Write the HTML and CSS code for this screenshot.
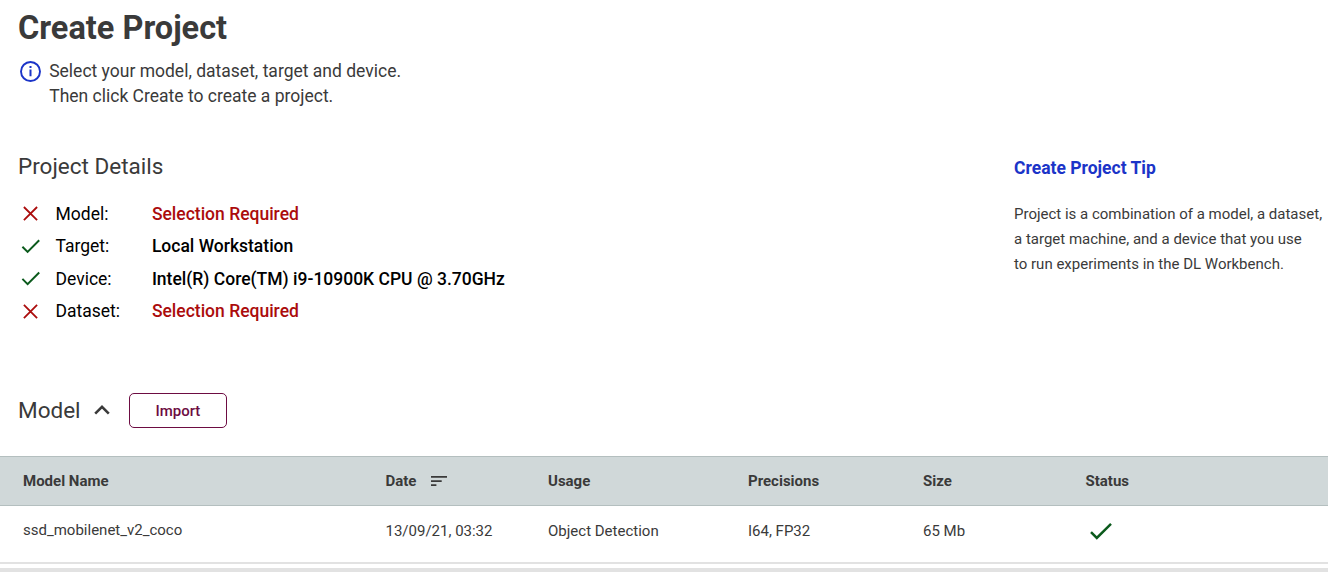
FILE: index.html
```html
<!DOCTYPE html>
<html lang="en">
<head>
  <meta charset="UTF-8">
  <meta name="viewport" content="width=device-width, initial-scale=1.0">
  <title>Create Project</title>
  <link rel="stylesheet" href="styles.css">
</head>
<body>
  <header class="page-header">
    <h1>Create Project</h1>
    <div class="info">
      <svg class="info-icon" viewBox="0 0 22 22" width="22" height="22">
        <circle cx="10.5" cy="10.5" r="9.5" fill="none" stroke="currentColor" stroke-width="1.9"/>
        <path d="M9.5 5h2v2h-2zM9.5 8.6h2v6.6h-2z" fill="currentColor"/>
      </svg>
      <p>Select your model, dataset, target and device.<br>Then click Create to create a project.</p>
    </div>
  </header>

  <main>
    <div class="overview">
      <section class="details">
        <h2>Project Details</h2>
        <ul class="details-list">
          <li>
            <svg class="icon-cross" viewBox="0 0 20 20" width="20" height="20"><path d="M2.9 3l13.2 13.2M16.1 3L2.9 16.2"/></svg>
            <span class="label">Model:</span>
            <span class="value required">Selection Required</span>
          </li>
          <li>
            <svg class="icon-check" viewBox="0 0 20 20" width="20" height="20"><path d="M1.4 10.7l5.2 5.2L18.2 4.3"/></svg>
            <span class="label">Target:</span>
            <span class="value">Local Workstation</span>
          </li>
          <li>
            <svg class="icon-check" viewBox="0 0 20 20" width="20" height="20"><path d="M1.4 9.9l5.2 5.2L18.2 3.5"/></svg>
            <span class="label">Device:</span>
            <span class="value">Intel(R) Core(TM) i9-10900K CPU @ 3.70GHz</span>
          </li>
          <li>
            <svg class="icon-cross" viewBox="0 0 20 20" width="20" height="20"><path d="M2.9 3.9l13.2 13.2M16.1 3.9L2.9 17.1"/></svg>
            <span class="label">Dataset:</span>
            <span class="value required">Selection Required</span>
          </li>
        </ul>
      </section>
      <aside class="tip">
        <h3>Create Project Tip</h3>
        <p>Project is a combination of a model, a dataset,<br>a target machine, and a device that you use<br>to run experiments in the DL Workbench.</p>
      </aside>
    </div>

    <section class="models">
      <div class="models-header">
        <h2>Model</h2>
        <svg class="icon-chevron" viewBox="0 0 16 10" width="16" height="10"><path d="M1.2 8.6L8 1.9l6.8 6.7"/></svg>
        <button type="button" class="import-button">Import</button>
      </div>
      <table class="models-table">
        <colgroup>
          <col class="col-name">
          <col class="col-date">
          <col class="col-usage">
          <col class="col-precisions">
          <col class="col-size">
          <col class="col-status">
        </colgroup>
        <thead>
          <tr>
            <th>Model Name</th>
            <th>
              <span class="sortable">Date
                <svg viewBox="0 0 16 10" width="16" height="10"><path d="M0 0h16v1.7H0zM0 4.2h10.7v1.7H0zM0 8.3h5.4V10H0z" fill="currentColor"/></svg>
              </span>
            </th>
            <th>Usage</th>
            <th>Precisions</th>
            <th>Size</th>
            <th>Status</th>
          </tr>
        </thead>
        <tbody>
          <tr>
            <td class="model-name">ssd_mobilenet_v2_coco</td>
            <td>13/09/21, 03:32</td>
            <td>Object Detection</td>
            <td>I64, FP32</td>
            <td>65 Mb</td>
            <td><svg class="icon-check icon-status" viewBox="0 0 22 18" width="22" height="18"><path d="M1 10.1l5.8 5.8L21 1.9"/></svg></td>
          </tr>
        </tbody>
      </table>
    </section>
  </main>
  <div class="divider"></div>
</body>
</html>
```
FILE: styles.css
```css
* {
  box-sizing: border-box;
}

body {
  margin: 0;
  font-family: Roboto, sans-serif;
  font-size: 15px;
  color: #3a3a3a;
  background-color: #fff;
  overflow: hidden;
}

h1, h2, h3, p, ul {
  margin: 0;
  padding: 0;
}

svg {
  display: block;
  flex-shrink: 0;
}

.page-header {
  height: 151px;
  padding: 8px 18px 0;
}

h1 {
  font-size: 32.5px;
  font-weight: 700;
  line-height: 40px;
}

h2 {
  font-size: 22.5px;
  font-weight: 400;
  line-height: 30px;
}

.info {
  display: flex;
  gap: 7.2px;
  margin-top: 11px;
  padding-left: 2px;
  font-size: 17.5px;
  line-height: 25px;
}

.info-icon {
  margin-top: 2px;
  color: #1b34c8;
}

.overview {
  display: flex;
  height: 242px;
  padding-left: 18px;
}

.details {
  width: 996px;
}

.details-list {
  margin-top: 16.7px;
  list-style: none;
  font-size: 17.5px;
  color: #000;
}

.details-list li {
  display: flex;
  align-items: center;
  height: 32.4px;
  padding-left: 2.5px;
}

.label {
  width: 96.4px;
  margin-left: 15px;
}

.value {
  font-weight: 500;
}

.required {
  color: #ab0c0c;
}

.icon-cross,
.icon-check,
.icon-chevron {
  fill: none;
  stroke-width: 2;
}

.icon-cross {
  stroke: #ab0c0c;
  stroke-width: 1.8;
}

.icon-check {
  stroke: #0b5a1c;
}

.icon-status {
  margin-left: 4.5px;
  stroke-width: 2.5;
}

.icon-chevron {
  margin: 0 18.8px 0 13.5px;
  stroke: #3a3a3a;
  stroke-width: 2.6;
}

.tip {
  padding-top: 4px;
  white-space: nowrap;
}

.tip h3 {
  font-size: 17.5px;
  font-weight: 700;
  line-height: 26px;
  color: #1b34c8;
}

.tip p {
  margin-top: 21px;
  line-height: 25px;
}

.models-header {
  display: flex;
  align-items: center;
  height: 35px;
  margin-bottom: 28px;
  padding-left: 18px;
}

.models-header h2,
.icon-chevron {
  margin-bottom: 2px;
}

.import-button {
  width: 98px;
  height: 35px;
  padding: 0;
  border: 1px solid #6d0c42;
  border-radius: 5px;
  background-color: #fff;
  font-family: inherit;
  font-size: 15px;
  font-weight: 500;
  color: #6d0c42;
}

.models-table {
  width: 100%;
  table-layout: fixed;
  border-collapse: separate;
  border-spacing: 0;
}

.col-name {
  width: 362.5px;
}

.col-date {
  width: 162.5px;
}

.col-usage {
  width: 200px;
}

.col-precisions {
  width: 175px;
}

.col-size {
  width: 162.5px;
}

th, td {
  padding: 0 0 0 23px;
  text-align: left;
  vertical-align: middle;
}

th {
  height: 50px;
  border-top: 1px solid #b4bfbf;
  border-bottom: 1px solid #b4bfbf;
  background-color: #d0d8d9;
  font-weight: 700;
}

td {
  height: 58px;
  padding-bottom: 6px;
  border-bottom: 2px solid #e2e2e2;
}

.model-name {
  padding-bottom: 8px;
}

.sortable {
  display: flex;
  align-items: center;
  gap: 15px;
}

.divider {
  height: 4px;
  margin-top: 4px;
  background-color: #e2e2e2;
}
```
